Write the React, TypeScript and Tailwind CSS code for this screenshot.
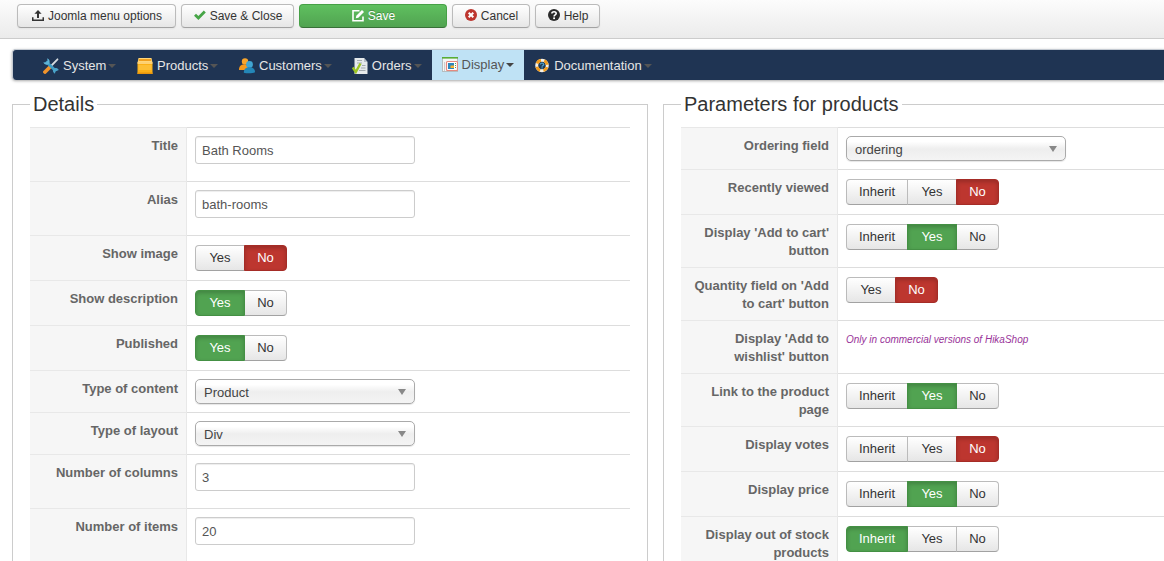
import { useState } from "react";
import type { ReactNode } from "react";

type Option = "Inherit" | "Yes" | "No";

/* ---------- toolbar icons ---------- */

const UploadIcon = () => (
  <svg width="14" height="14" viewBox="0 0 14 14" fill="#333" aria-hidden="true">
    <path d="M7 1 10.600 4.800H8V9H6V4.800H3.400z" />
    <path d="M1 8.300h1.500V10.500h9V8.300H13V12H1z" />
  </svg>
);

const CheckIcon = () => (
  <svg width="14" height="14" viewBox="0 0 14 14" fill="#46a546" aria-hidden="true">
    <path d="M1 6.700 3 4.700 5.400 7 10.800 1.500 12.800 3.500 5.400 10.900z" />
  </svg>
);

const EditIcon = () => (
  <svg width="14" height="14" viewBox="0 0 14 14" fill="none" aria-hidden="true">
    <path d="M8.500 1.800H2v10h10V7.500" stroke="#fff" strokeWidth="1.600" />
    <path d="M4.800 9.300 5.300 6.800 11 1.100 13 3 7.300 8.700z" fill="#fff" />
  </svg>
);

const CancelIcon = () => (
  <svg width="14" height="14" viewBox="0 0 14 14" aria-hidden="true">
    <circle cx="7" cy="6" r="6" fill="#bd362f" />
    <path d="M4.700 3.700 9.300 8.300M9.300 3.700 4.700 8.300" stroke="#fff" strokeWidth="2" />
  </svg>
);

const HelpIcon = () => (
  <svg width="14" height="14" viewBox="0 0 14 14" aria-hidden="true">
    <circle cx="7" cy="6" r="6" fill="#2b2b2b" />
    <path d="M4.900 4.500c0-2.400 4.300-2.300 4.300 0 0 1.500-2.100 1.300-2.100 2.900" stroke="#fff" strokeWidth="1.600" fill="none" />
    <rect x="6.200" y="8.400" width="1.800" height="1.700" fill="#fff" />
  </svg>
);

/* ---------- menu icons ---------- */

const ToolsIcon = () => (
  <svg width="16" height="16" viewBox="0 0 16 16" aria-hidden="true">
    <path d="M2 14 6.500 9.500" stroke="#f0932b" strokeWidth="3.800" strokeLinecap="round" />
    <path d="M7.500 8.500 14.500 1.300" stroke="#d5dade" strokeWidth="1.800" strokeLinecap="round" />
    <path d="M3 3.500 12.800 13" stroke="#3f9cc4" strokeWidth="3" />
    <path d="M.4 4.200A3.500 3.500 0 0 0 5.800 6 3.500 3.500 0 0 0 4.200.3L4.500 3 3 4.400z" fill="#5fb4d6" />
    <path d="M15.800 12A3.500 3.500 0 0 0 10.500 10.600 3.500 3.500 0 0 0 12 15.800L12.400 13.500z" fill="#4aa3c9" />
  </svg>
);

const BoxIcon = () => (
  <svg width="16" height="16" viewBox="0 0 16 16" aria-hidden="true">
    <path d="M1.500 0h13l1 5H.5z" fill="#ffd67a" />
    <path d="M2 1h12l.4 2H1.600z" fill="#f0a01e" />
    <rect x=".5" y="4.500" width="15" height="11.500" fill="#fbb017" />
    <rect x=".5" y="4.500" width="15" height="1.200" fill="#ffe09a" />
    <rect x="1.500" y="7" width="13" height="5" fill="#fdbf35" />
    <rect x=".5" y="14.500" width="15" height="1.500" fill="#e8940c" />
  </svg>
);

const PeopleIcon = () => (
  <svg width="16" height="16" viewBox="0 0 16 16" aria-hidden="true">
    <circle cx="6" cy="3.500" r="3.200" fill="#f9a52b" />
    <path d="M0 12c0-4 2-5.500 5-5.500s4.500 1.500 4.500 5.500z" fill="#f79a1c" />
    <circle cx="10.500" cy="6.500" r="3.400" fill="#41a6d3" />
    <path d="M4.800 14.800c0-3.800 2.300-5.500 5.700-5.500s5.500 1.700 5.500 5c-2 1.200-8 1.400-11.200.5z" fill="#2487b8" />
  </svg>
);

const OrderIcon = () => (
  <svg width="16" height="16" viewBox="0 0 16 16" aria-hidden="true">
    <path d="M2.500 0H12l3.500 4v12h-13z" fill="#e6eaec" />
    <path d="M12 0v4h3.500z" fill="#b7bfc6" />
    <path d="M5 2.500h5M5 5h5M10 7.500h3.500M9 10h4.500M7 12.500h6.500" stroke="#a4abb0" />
    <path d="M.8 9.500 3.800 14 8.500 5.500" stroke="#9cc422" strokeWidth="2.400" fill="none" />
  </svg>
);

const DisplayIcon = () => (
  <svg width="16" height="16" viewBox="0 0 16 16" aria-hidden="true">
    <rect x=".5" y=".5" width="15" height="14" fill="#f3f6f6" stroke="#b5bdc0" />
    <rect x="0" y="0" width="16" height="1.600" fill="#58ad35" />
    <path d="M2.500 5v9" stroke="#c9cfd1" />
    <rect x="4.500" y="4.500" width="11" height="9" rx="1" fill="#fff" stroke="#e58a80" strokeWidth="1.200" />
    <rect x="6" y="6" width="6" height="6" fill="#2b86bd" />
    <rect x="8.500" y="8.500" width="3.500" height="2.500" fill="#f3b233" />
    <path d="M13.500 6v6" stroke="#5aa04a" strokeDasharray="1 1" />
  </svg>
);

const LifebuoyIcon = () => (
  <svg width="16" height="16" viewBox="0 0 16 16" aria-hidden="true">
    <circle cx="8" cy="7.500" r="5.300" stroke="#f4f1e8" strokeWidth="3" fill="#1f3a57" />
    <circle cx="8" cy="7.500" r="5.300" stroke="#f09a1a" strokeWidth="3" fill="none" strokeDasharray="4.900 3.425" strokeDashoffset="-1.700" />
    <path d="M6.300 6.500c0-1.900 3.400-1.800 3.400 0 0 1.200-1.600 1.100-1.600 2.200" stroke="#4d9cc4" strokeWidth="1.300" fill="none" />
    <rect x="7.400" y="9.300" width="1.400" height="1.200" fill="#4d9cc4" />
  </svg>
);

/* ---------- controls ---------- */

function ToolbarButton({ icon, className = "", children }: { icon: ReactNode; className?: string; children: ReactNode }) {
  return (
    <button
      type="button"
      className={`flex h-6 items-center justify-center gap-[3px] rounded border border-[#bbb] border-b-[#a2a2a2] bg-linear-to-b from-white to-[#e6e6e6] px-2.5 text-[12px] leading-4 text-[#333] shadow-[0_1px_2px_rgba(0,0,0,0.05)] ${className}`}
    >
      {icon}
      {children}
    </button>
  );
}

function MenuItem({ icon, label, active = false, className = "" }: { icon: ReactNode; label: string; active?: boolean; className?: string }) {
  return (
    <li className={`flex ${className}`}>
      <a
        href="#"
        className={`flex h-[30px] grow items-center gap-1 px-2.5 text-[13px] leading-[18px] ${
          active ? "bg-[#bfe2f5] text-[#555]" : "pt-0.5 text-[#e6e6e6]"
        }`}
      >
        {icon}
        <span className="flex items-center gap-0.5">
          {label}
          <svg width="8" height="4" viewBox="0 0 8 4" fill={active ? "#444" : "#555"} aria-hidden="true">
            <path d="M0 0h8L4 4z" />
          </svg>
        </span>
      </a>
    </li>
  );
}

function Row({ label, htmlFor, children }: { label: string; htmlFor?: string; children: ReactNode }) {
  const text = "block text-right text-[13px] leading-[18px] font-bold text-[#666]";
  return (
    <div className="flex">
      <div className="w-[157px] shrink-0 border-t border-r border-[#e8e8e8] bg-[#f6f6f6] px-2 pt-[9px] pb-[7px]">
        {htmlFor ? (
          <label htmlFor={htmlFor} className={text}>{label}</label>
        ) : (
          <span className={text}>{label}</span>
        )}
      </div>
      <div className="min-w-0 grow border-t border-[#ddd] p-2">{children}</div>
    </div>
  );
}

function TextRow({ id, label, value }: { id: string; label: string; value: string }) {
  return (
    <Row label={label} htmlFor={id}>
      <input
        id={id}
        type="text"
        defaultValue={value}
        className="mb-[9px] block h-7 w-[220px] rounded-[3px] border border-[#ccc] bg-white px-1.5 text-[13px] leading-[18px] text-[#555] shadow-[inset_0_1px_1px_rgba(0,0,0,0.075)]"
      />
    </Row>
  );
}

function SelectRow({ id, label, options }: { id: string; label: string; options: string[] }) {
  return (
    <Row label={label} htmlFor={id}>
      <div className="relative w-[220px]">
        <select
          id={id}
          className="block h-[25px] w-full appearance-none rounded-[5px] border border-[#aaa] bg-linear-to-b from-white from-20% via-[#eee] via-52% to-[#f4f4f4] px-2 pt-0.5 text-[13px] text-[#444] shadow-[0_1px_1px_rgba(0,0,0,0.1)]"
        >
          {options.map((o) => (
            <option key={o}>{o}</option>
          ))}
        </select>
        <svg className="pointer-events-none absolute top-[10px] right-[9px]" width="8" height="6" viewBox="0 0 8 6" fill="#888" aria-hidden="true">
          <path d="M0 0h8L4 6z" />
        </svg>
      </div>
    </Row>
  );
}

const optionWidth: Record<Option, string> = {
  Inherit: "w-[62px]",
  Yes: "w-[50px]",
  No: "w-[43px]",
};

function ChoiceRow({ label, options, initial }: { label: string; options: Option[]; initial: Option }) {
  const [value, setValue] = useState<Option>(initial);
  return (
    <Row label={label}>
      <div role="group" aria-label={label} className="flex py-px">
        {options.map((o) => {
          const tone =
            o !== value
              ? "border-[#bbb] border-b-[#a2a2a2] bg-linear-to-b from-white to-[#e6e6e6] text-[#333]"
              : o === "No"
                ? "z-10 border-[#a52c26] bg-[#bd362f] text-white shadow-[inset_0_2px_4px_rgba(0,0,0,0.2)]"
                : "z-10 border-[#449044] bg-[#51a351] text-white shadow-[inset_0_2px_4px_rgba(0,0,0,0.2)]";
          return (
            <button
              key={o}
              type="button"
              aria-pressed={o === value}
              onClick={() => setValue(o)}
              className={`h-[26px] border text-center text-[13px] leading-[18px] not-first:-ml-px first:rounded-l last:rounded-r ${optionWidth[o]} ${tone}`}
            >
              {o}
            </button>
          );
        })}
      </div>
    </Row>
  );
}

const yesNo: Option[] = ["Yes", "No"];
const withInherit: Option[] = ["Inherit", "Yes", "No"];

export default function App() {
  return (
    <div className="h-screen overflow-hidden bg-white font-['Liberation_Sans',Arial,sans-serif] text-[13px] text-[#333]">
      <header className="flex h-[39px] items-start gap-[5px] border-b border-[#ccc] bg-linear-to-b from-[#fcfcfc] to-[#ebebeb] pt-1 pl-[17px]">
        <ToolbarButton icon={<UploadIcon />} className="min-w-[159px]">Joomla menu options</ToolbarButton>
        <ToolbarButton icon={<CheckIcon />} className="min-w-[113px]">Save &amp; Close</ToolbarButton>
        <button
          type="button"
          className="flex h-6 w-[148px] items-center justify-center gap-[3px] rounded border border-[#46a046] border-b-[#387038] bg-linear-to-b from-[#5fc05f] to-[#51a351] text-[12px] leading-4 text-white [text-shadow:0_-1px_0_rgba(0,0,0,0.25)]"
        >
          <EditIcon />
          Save
        </button>
        <ToolbarButton icon={<CancelIcon />} className="min-w-[78px]">Cancel</ToolbarButton>
        <ToolbarButton icon={<HelpIcon />} className="min-w-[65px]">Help</ToolbarButton>
      </header>

      <nav className="mt-2.5 ml-3 rounded-l border-t border-l border-[#c4cad2] bg-[#1f3453] shadow-[0_1px_3px_rgba(0,0,0,0.35)]">
        <ul className="flex pl-5">
          <MenuItem icon={<ToolsIcon />} label="System" className="min-w-[94px]" />
          <MenuItem icon={<BoxIcon />} label="Products" className="min-w-[102px]" />
          <MenuItem icon={<PeopleIcon />} label="Customers" />
          <MenuItem icon={<OrderIcon />} label="Orders" />
          <MenuItem icon={<DisplayIcon />} label="Display" active />
          <MenuItem icon={<LifebuoyIcon />} label="Documentation" />
        </ul>
      </nav>

      <main className="mt-3 ml-3 grid grid-cols-[636fr_501fr] gap-[15px]">
        <fieldset className="min-w-0 border border-[#ccc] px-[17px] pt-[11px] pb-4">
          <legend className="px-[3px] text-[20px] leading-6">Details</legend>
          <TextRow id="title" label="Title" value="Bath Rooms" />
          <TextRow id="alias" label="Alias" value="bath-rooms" />
          <ChoiceRow label="Show image" options={yesNo} initial="No" />
          <ChoiceRow label="Show description" options={yesNo} initial="Yes" />
          <ChoiceRow label="Published" options={yesNo} initial="Yes" />
          <SelectRow id="content-type" label="Type of content" options={["Product"]} />
          <SelectRow id="layout-type" label="Type of layout" options={["Div"]} />
          <TextRow id="columns" label="Number of columns" value="3" />
          <TextRow id="items" label="Number of items" value="20" />
        </fieldset>

        <fieldset className="min-w-0 border border-r-0 border-[#ccc] pt-[11px] pb-4 pl-[17px]">
          <legend className="px-[3px] text-[20px] leading-6">Parameters for products</legend>
          <SelectRow id="ordering" label="Ordering field" options={["ordering"]} />
          <ChoiceRow label="Recently viewed" options={withInherit} initial="No" />
          <ChoiceRow label="Display 'Add to cart' button" options={withInherit} initial="Yes" />
          <ChoiceRow label="Quantity field on 'Add to cart' button" options={yesNo} initial="No" />
          <Row label="Display 'Add to wishlist' button">
            <small className="block text-[10px] leading-[22px] text-[#993399] italic">
              Only in commercial versions of HikaShop
            </small>
          </Row>
          <ChoiceRow label="Link to the product page" options={withInherit} initial="Yes" />
          <ChoiceRow label="Display votes" options={withInherit} initial="No" />
          <ChoiceRow label="Display price" options={withInherit} initial="Yes" />
          <ChoiceRow label="Display out of stock products" options={withInherit} initial="Inherit" />
        </fieldset>
      </main>
    </div>
  );
}
